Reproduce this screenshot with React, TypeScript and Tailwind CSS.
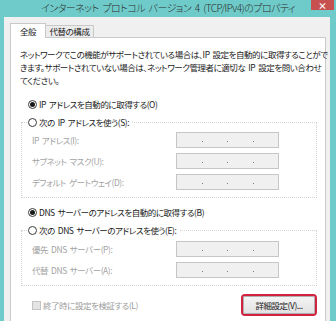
import React from "react";

function Radio({ checked }: { checked?: boolean }) {
  return (
    <span className="flex h-[9px] w-[9px] shrink-0 items-center justify-center rounded-full border border-[#3c3c3c] bg-white">
      {checked && <span className="h-[5px] w-[5px] rounded-full bg-[#1a1a1a]" />}
    </span>
  );
}

function IpBox() {
  return (
    <div className="flex h-[16px] w-[103px] items-center justify-evenly border border-[#c6c6c6] bg-[#f0f0f0] pt-[3px]">
      <span className="h-px w-px bg-[#7a7a7a]" />
      <span className="h-px w-px bg-[#7a7a7a]" />
      <span className="h-px w-px bg-[#7a7a7a]" />
    </div>
  );
}

function Row({ label }: { label: string }) {
  return (
    <div className="flex h-[16px] items-center">
      <span className="w-[144px] whitespace-nowrap text-[#a3a3a3]">{label}</span>
      <IpBox />
    </div>
  );
}

function Group({ legend, rows, pt }: { legend: string; rows: string[]; pt: string }) {
  return (
    <fieldset className="ml-[10px] mr-[8px] border border-dotted border-[#d2d2d2] px-0 pb-[7px]">
      <legend className="ml-[5px] flex h-[14px] items-center gap-[2px] pl-[1px] pr-[3px] text-[#1a1a1a]">
        <Radio />
        <span className="whitespace-nowrap">{legend}</span>
      </legend>
      <div className={`flex flex-col gap-[5px] pl-[10px] ${pt}`}>
        {rows.map((r) => (
          <Row key={r} label={r} />
        ))}
      </div>
    </fieldset>
  );
}

export default function App() {
  return (
    <div className="flex h-[321px] w-[336px] flex-col overflow-hidden bg-[#6ecbc9] font-['Noto_Sans_CJK_JP',sans-serif] [font-feature-settings:'palt']">
      {/* title bar */}
      <div className="relative flex h-[17px] shrink-0 justify-center">
        <span className="whitespace-nowrap text-[10px] font-light leading-[15px] tracking-[-0.55px] text-[#2e2e2e] [word-spacing:2px]">
          インターネット プロトコル バージョン 4 (TCP/IPv4)のプロパティ
        </span>
        <div className="absolute right-[2px] top-0 flex h-[10px] w-[23px] items-center justify-center bg-[#c75050] text-[9px] font-bold leading-none text-white">
          ×
        </div>
      </div>
      {/* dialog body */}
      <div className="ml-[4px] mr-[6px] flex flex-1 flex-col bg-[#f0f0f0] pl-[6px] pr-[4px] pt-[6px] text-[8.5px] leading-[13px] tracking-[-0.45px] [word-spacing:1.5px]">
        {/* tabs */}
        <div className="relative z-10 -mb-px flex h-[15px] items-end">
          <div className="flex h-[15px] w-[36px] items-start justify-center border border-b-0 border-[#c9c9c9] bg-white pt-[1px] text-[#1a1a1a]">
            全般
          </div>
          <div className="mb-px flex h-[12px] w-[48px] items-center justify-center border border-b-0 border-l-0 border-[#c9c9c9] bg-[#ececec] text-[#1a1a1a]">
            代替の構成
          </div>
        </div>
        {/* panel */}
        <div className="flex h-[300px] flex-col border border-[#c9c9c9] bg-white text-[#1a1a1a]">
          <p className="mt-[10px] whitespace-nowrap pl-[9px]">
            ネットワークでこの機能がサポートされている場合は、IP 設定を自動的に取得することがで
            <br />
            きます。サポートされていない場合は、ネットワーク管理者に適切な IP 設定を問い合わせ
            <br />
            てください。
          </p>
          <div className="ml-[17px] mt-[11px] flex h-[13px] items-center gap-[2px]">
            <Radio checked />
            <span className="whitespace-nowrap">IP アドレスを自動的に取得する(O)</span>
          </div>
          <div className="mt-[4px]">
            <Group
              legend="次の IP アドレスを使う(S):"
              rows={["IP アドレス(I):", "サブネット マスク(U):", "デフォルト ゲートウェイ(D):"]}
              pt="pt-[3px]"
            />
          </div>
          <div className="ml-[17px] mt-[8px] flex h-[13px] items-center gap-[2px]">
            <Radio checked />
            <span className="whitespace-nowrap">DNS サーバーのアドレスを自動的に取得する(B)</span>
          </div>
          <div className="mt-[4px]">
            <Group
              legend="次の DNS サーバーのアドレスを使う(E):"
              rows={["優先 DNS サーバー(P):", "代替 DNS サーバー(A):"]}
              pt="pt-[4px]"
            />
          </div>
          <div className="mt-[8px] flex items-center justify-between pl-[21px] pr-[8px]">
            <div className="flex items-center gap-[2px]">
              <span className="h-[9px] w-[9px] border border-[#c4c4c4] bg-[#e4e4e4]" />
              <span className="whitespace-nowrap text-[#9c9c9c]">終了時に設定を検証する(L)</span>
            </div>
            <div className="rounded-[4px] border-2 border-[#d3223f]">
              <div className="flex h-[18px] w-[72px] items-center justify-center rounded-[2px] border border-[#b0b0b0] bg-gradient-to-b from-[#f4f4f4] to-[#e2e2e2] text-[#1a1a1a]">
                詳細設定(V)...
              </div>
            </div>
          </div>
        </div>
      </div>
    </div>
  );
}
